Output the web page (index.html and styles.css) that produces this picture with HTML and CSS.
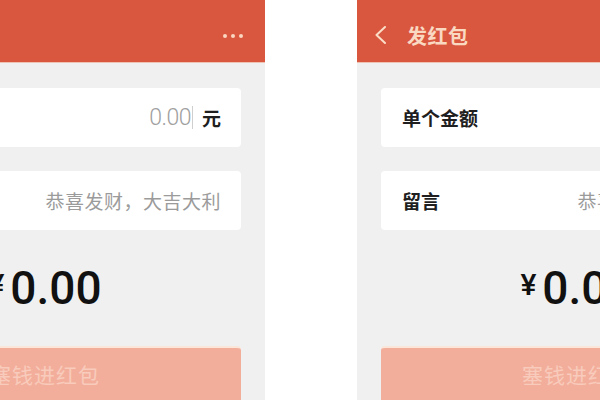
FILE: index.html
```html
<!DOCTYPE html>
<html lang="zh-CN">
<head>
<meta charset="utf-8">
<title>发红包</title>
<link rel="stylesheet" href="styles.css">
</head>
<body>
<div class="stage">
  <div class="phone phone-left">
    <div class="header">
      <svg class="back" width="14" height="18" viewBox="0 0 14 18"><path d="M12 1 L3.5 9 L12 17" fill="none" stroke="#fbdcc6" stroke-width="2" stroke-linecap="round" stroke-linejoin="round"/></svg>
      <span class="title">发红包</span>
      <span class="more"><i></i><i></i><i></i></span>
    </div>
    <div class="content">
      <div class="card">
        <span class="label">单个金额</span>
        <span class="value"><span class="num">0.00</span><span class="cursor"></span><span class="unit">元</span></span>
      </div>
      <div class="card">
        <span class="label">留言</span>
        <span class="placeholder">恭喜发财，大吉大利</span>
      </div>
      <div class="amount"><span class="yen">¥</span><span class="big">0.00</span></div>
      <div class="btn">塞钱进红包</div>
    </div>
  </div>
  <div class="phone phone-right">
    <div class="header">
      <svg class="back" width="14" height="18" viewBox="0 0 14 18"><path d="M12 1 L3.5 9 L12 17" fill="none" stroke="#fbdcc6" stroke-width="2" stroke-linecap="round" stroke-linejoin="round"/></svg>
      <span class="title">发红包</span>
      <span class="more"><i></i><i></i><i></i></span>
    </div>
    <div class="content">
      <div class="card">
        <span class="label">单个金额</span>
        <span class="value"><span class="num">0.00</span><span class="cursor"></span><span class="unit">元</span></span>
      </div>
      <div class="card">
        <span class="label">留言</span>
        <span class="placeholder">恭喜发财，大吉大利</span>
      </div>
      <div class="amount"><span class="yen">¥</span><span class="big">0.00</span></div>
      <div class="btn">塞钱进红包</div>
    </div>
  </div>
</div>
</body>
</html>
```
FILE: styles.css
```css
html, body {
  margin: 0;
  padding: 0;
  background: #ffffff;
  overflow: hidden;
}
body {
  width: 600px;
  height: 400px;
  font-family: "Noto Sans CJK SC", "Noto Sans", sans-serif;
}
.stage {
  display: flex;
  gap: 92px;
  margin-left: -175px;
  width: 1100px;
  height: 400px;
}
.phone {
  width: 440px;
  flex: none;
  height: 400px;
  background: #f0f0f0;
  display: flex;
  flex-direction: column;
}
.header {
  height: 65px;
  box-sizing: border-box;
  padding: 9px 22px 0 16px;
  background: #d9573f;
  display: flex;
  align-items: center;
  border-bottom: 1px solid #eec3b4;
}
.back {
  margin-right: 20px;
  margin-top: -1px;
}
.title {
  color: #f9d9c2;
  font-size: 20px;
  font-weight: 700;
  letter-spacing: 0.5px;
  flex: 1;
}
.more {
  display: flex;
  gap: 4px;
}
.more i {
  width: 4px;
  height: 4px;
  border-radius: 50%;
  background: #fbd6c0;
}
.content {
  padding: 25px 24px 0 24px;
  display: flex;
  flex-direction: column;
}
.card {
  height: 59px;
  background: #ffffff;
  border-radius: 4px;
  padding: 0 20px 0 21px;
  display: flex;
  align-items: center;
  justify-content: space-between;
  margin-bottom: 24px;
}
.card:nth-child(2) {
  margin-bottom: 0;
}
.label {
  font-size: 19px;
  font-weight: 700;
  color: #1f1f1f;
}
.value {
  display: flex;
  align-items: center;
}
.num {
  font-family: "Roboto", "Noto Sans", sans-serif;
  font-weight: 300;
  font-size: 23px;
  letter-spacing: -0.5px;
  color: #a0a0a0;
}
.cursor {
  width: 1px;
  height: 23px;
  background: #cfcfcf;
  margin: 0 9px 0 1px;
}
.unit {
  font-size: 19px;
  font-weight: 700;
  color: #1f1f1f;
}
.placeholder {
  font-size: 19px;
  color: #9b9b9b;
  letter-spacing: 0.5px;
}
.amount {
  height: 116px;
  display: flex;
  align-items: center;
  justify-content: center;
  color: #111111;
}
.yen {
  font-family: "Roboto", "Noto Sans", sans-serif;
  font-size: 30px;
  font-weight: 500;
  margin-right: 6px;
  margin-top: -8px;
}
.big {
  font-family: "Roboto", "Noto Sans", sans-serif;
  font-size: 46px;
  font-weight: 500;
}
.btn {
  height: 52px;
  background: #f3ae9b;
  border-top: 2px solid #fbe6da;
  border-radius: 4px 4px 0 0;
  display: flex;
  align-items: center;
  justify-content: center;
  color: #f8cbbc;
  font-size: 21px;
  letter-spacing: 1px;
}
```
